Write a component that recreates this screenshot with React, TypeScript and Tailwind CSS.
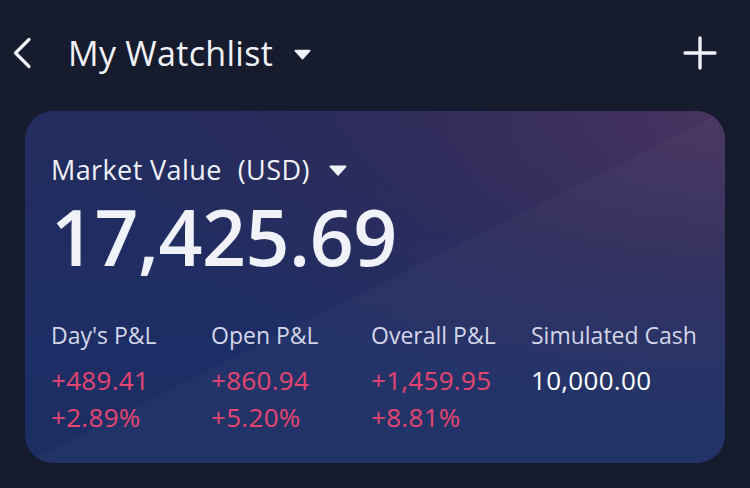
import React from 'react';

const stats = [
  { label: "Day's P&L", value: '+489.41', pct: '+2.89%', up: true },
  { label: 'Open P&L', value: '+860.94', pct: '+5.20%', up: true },
  { label: 'Overall P&L', value: '+1,459.95', pct: '+8.81%', up: true },
  { label: 'Simulated Cash', value: '10,000.00', pct: '', up: false },
];

function Caret({ className }: { className?: string }) {
  return (
    <svg viewBox="0 0 18 12" className={className} fill="currentColor">
      <path d="M1.5 1.5h15a1 1 0 0 1 .8 1.6l-7.5 8.2a1 1 0 0 1-1.6 0L.7 3.1a1 1 0 0 1 .8-1.6z" />
    </svg>
  );
}

export default function App() {
  return (
    <div
      className="w-[750px] h-[488px] overflow-hidden bg-[#161b2e] text-[#f1f2f8]"
      style={{ fontFamily: '"Open Sans", "Noto Sans", sans-serif' }}
    >
      {/* Header */}
      <div className="h-[105px] flex items-center pl-[12px] pr-[33px]">
        <svg viewBox="0 0 20 32" className="w-[20px] h-[32px]" fill="none" stroke="currentColor" strokeWidth="3.2" strokeLinecap="round" strokeLinejoin="round">
          <path d="M17 2.5 3.5 16 17 29.5" />
        </svg>
        <h1 className="ml-[36px] text-[34px] leading-[40px] tracking-[0.3px]">My Watchlist</h1>
        <Caret className="ml-[21px] w-[17px] h-[12px] mt-[2px]" />
        <svg viewBox="0 0 34 34" className="ml-auto w-[34px] h-[34px]" fill="none" stroke="currentColor" strokeWidth="3.4" strokeLinecap="round">
          <path d="M17 2v30M2 17h30" />
        </svg>
      </div>

      {/* Market value card */}
      <div className="mx-[25px] mt-[6px] h-[352px] rounded-[28px] pl-[26px] pt-[45px] bg-[linear-gradient(to_bottom_right,transparent_50%,rgba(255,255,255,0.028)_50%),radial-gradient(ellipse_at_100%_0%,rgba(76,52,96,0.9)_0%,rgba(60,44,88,0.55)_30%,transparent_62%),linear-gradient(180deg,#232c5d_0%,#1d2e66_70%,#1c2d62_100%)]">
        <div className="flex items-center h-[28px] text-[27px] leading-[28px] tracking-[0.4px]">
          <span>Market Value</span>
          <span className="ml-[16px]">(USD)</span>
          <Caret className="ml-[19px] w-[18px] h-[12px]" />
        </div>
        <div className="mt-[3px] h-[100px] text-[77px] font-semibold leading-[100px] tracking-[-0.5px]">17,425.69</div>

        <div className="mt-[33px] flex">
          {stats.map((s) => (
            <div key={s.label} className="w-[160px] shrink-0">
              <div className="h-[30px] text-[23px] leading-[30px] text-[#d3d6e8] whitespace-nowrap">{s.label}</div>
              <div className={`mt-[13px] h-[34px] text-[26px] leading-[34px] tracking-[0.3px] whitespace-nowrap ${s.up ? 'text-[#e5456f]' : 'text-white'}`}>{s.value}</div>
              {s.pct && <div className="mt-[3px] h-[34px] text-[26px] leading-[34px] tracking-[0.3px] text-[#e5456f]">{s.pct}</div>}
            </div>
          ))}
        </div>
      </div>
    </div>
  );
}
